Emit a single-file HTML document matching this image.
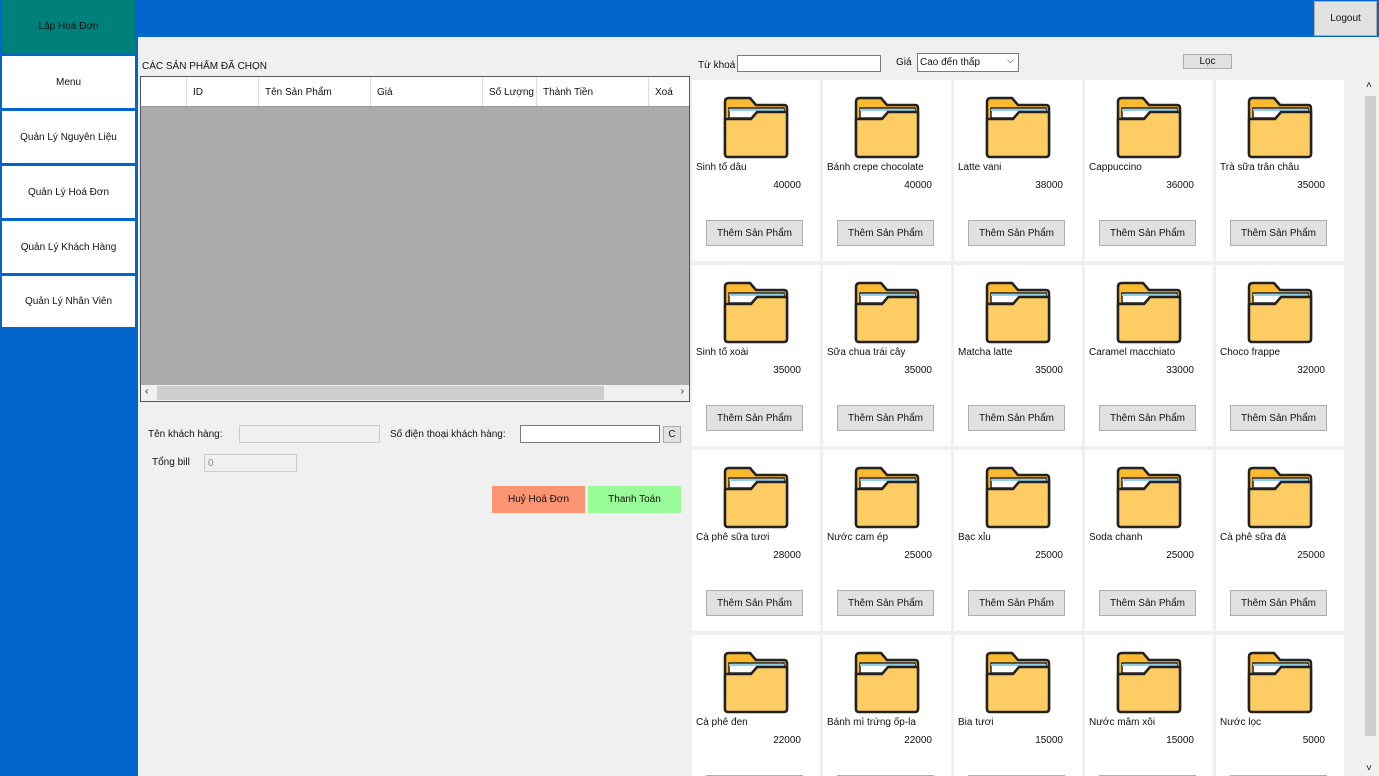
<!DOCTYPE html>
<html style="width:1379px;height:776px;overflow:hidden"><head><meta charset="utf-8"><style>
*{box-sizing:border-box;margin:0;padding:0}
body{width:1379px;height:776px;overflow:hidden;background:#0066cc;font-family:"Liberation Sans",sans-serif;font-size:10px;color:#111;position:relative;white-space:nowrap}
.a{position:absolute}
.side{position:absolute;left:2px;width:133px;background:#fff;display:flex;align-items:center;justify-content:center}
.main{position:absolute;left:138px;top:37px;width:1241px;height:739px;background:#f0f0f0}
.btn{position:absolute;background:#e1e1e1;border:1px solid #adadad;display:flex;align-items:center;justify-content:center}
.inp{position:absolute;background:#fff;border:1px solid #7a7a7a}
.card{position:absolute;width:128px;height:181px;background:#fff}
.card svg{position:absolute;left:31px;top:16px}
.card .n{position:absolute;left:4px;top:82px}
.card .p{position:absolute;right:19px;top:100px}
.card .b{left:14px;top:140px;width:97px;height:26px}
.th{position:absolute;top:0;height:29px;border-right:1px solid #ddd;padding:10px 0 0 6px}
#clip{position:absolute;left:0;top:0;width:1379px;height:776px;overflow:hidden}
</style></head><body><div id="clip">
<div class="side" style="top:0;height:53px;background:#00807a">Lập Hoá Đơn</div>
<div class="side" style="top:56px;height:52px">Menu</div>
<div class="side" style="top:111px;height:52px">Quản Lý Nguyên Liệu</div>
<div class="side" style="top:166px;height:52px">Quản Lý Hoá Đơn</div>
<div class="side" style="top:221px;height:52px">Quản Lý Khách Hàng</div>
<div class="side" style="top:276px;height:51px">Quản Lý Nhân Viên</div>
<div class="btn" style="left:1314px;top:1px;width:63px;height:35px">Logout</div>
<div class="main"></div>
<div class="a" style="left:142px;top:61px">CÁC SẢN PHẨM ĐÃ CHỌN</div>
<div class="a" style="left:140px;top:76px;width:550px;height:326px;border:1px solid #555;background:#ababab">
 <div class="a" style="left:0;top:0;width:548px;height:30px;background:#fff;border-bottom:1px solid #999">
  <div class="th" style="left:0;width:46px"></div>
  <div class="th" style="left:46px;width:72px">ID</div>
  <div class="th" style="left:118px;width:112px">Tên Sản Phẩm</div>
  <div class="th" style="left:230px;width:112px">Giá</div>
  <div class="th" style="left:342px;width:54px">Số Lượng</div>
  <div class="th" style="left:396px;width:112px">Thành Tiền</div>
  <div class="th" style="left:508px;width:40px;border:none">Xoá</div>
 </div>
 <div class="a" style="left:0;top:308px;width:548px;height:16px;background:#f0f0f0">
  <div class="a" style="left:16px;top:1px;width:447px;height:14px;background:#cdcdcd"></div>
  <div class="a" style="left:4px;top:1px">‹</div>
  <div class="a" style="right:5px;top:1px">›</div>
 </div>
</div>
<div class="a" style="left:148px;top:429px">Tên khách hàng:</div>
<div class="inp" style="left:239px;top:425px;width:141px;height:18px;background:#f0f0f0;border-color:#ccc"></div>
<div class="a" style="left:390px;top:429px">Số điện thoại khách hàng:</div>
<div class="inp" style="left:520px;top:425px;width:140px;height:18px"></div>
<div class="btn" style="left:663px;top:426px;width:18px;height:17px">C</div>
<div class="a" style="left:152px;top:457px">Tổng bill</div>
<div class="inp" style="left:204px;top:454px;width:93px;height:18px;background:#f0f0f0;border-color:#ccc;color:#888;padding:3px 3px">0</div>
<div class="btn" style="left:492px;top:486px;width:93px;height:27px;background:#fa9473;border-color:#fa9473">Huỷ Hoá Đơn</div>
<div class="btn" style="left:588px;top:486px;width:93px;height:27px;background:#98fb98;border-color:#98fb98">Thanh Toán</div>
<div class="a" style="left:698px;top:60px">Từ khoá</div>
<div class="inp" style="left:737px;top:55px;width:144px;height:17px"></div>
<div class="a" style="left:896px;top:57px">Giá</div>
<div class="inp" style="left:917px;top:53px;width:102px;height:19px;padding:3px 2px">Cao đến thấp<span style="position:absolute;right:4px;top:1px;font-size:9px">⌵</span></div>
<div class="btn" style="left:1183px;top:54px;width:49px;height:15px">Lọc</div>
<div class="a" style="left:1362px;top:78px;width:17px;height:698px;background:#f0f0f0">
 <div class="a" style="left:3px;top:18px;width:11px;height:640px;background:#cdcdcd"></div>
 <div class="a" style="left:4px;top:2px">˄</div>
 <div class="a" style="left:4px;bottom:2px">˅</div>
</div>
<div id="cards"></div>
</div>
<script>
var d=[["Sinh tố dâu",40000],["Bánh crepe chocolate",40000],["Latte vani",38000],["Cappuccino",36000],["Trà sữa trân châu",35000],["Sinh tố xoài",35000],["Sữa chua trái cây",35000],["Matcha latte",35000],["Caramel macchiato",33000],["Choco frappe",32000],["Cà phê sữa tươi",28000],["Nước cam ép",25000],["Bạc xỉu",25000],["Soda chanh",25000],["Cà phê sữa đá",25000],["Cà phê đen",22000],["Bánh mì trứng ốp-la",22000],["Bia tươi",15000],["Nước mâm xôi",15000],["Nước lọc",5000]];
var svg='<svg width="66" height="63" viewBox="0 0 66 63"><path d="M2 6 Q2 2 6 2 L27 2 L33 9 L61 9 Q64 9 64 12 L64 58 L2 58 Z" fill="#fbb92f" stroke="#222" stroke-width="2.5" stroke-linejoin="round"/><rect x="6" y="12" width="55" height="10" fill="#fff" stroke="#222" stroke-width="1.5"/><rect x="6" y="13" width="55" height="2" fill="#8fd0e8"/><path d="M2 23 L28 23 L34 16 L64 16 L64 58 Q64 61 61 61 L5 61 Q2 61 2 58 Z" fill="#fdcc63" stroke="#222" stroke-width="2.5" stroke-linejoin="round"/></svg>';
var h='';
d.forEach(function(x,i){var c=i%5,r=Math.floor(i/5);
h+='<div class="card" style="left:'+(692+c*131)+'px;top:'+(80+r*185)+'px">'+svg+'<div class="n">'+x[0]+'</div><div class="p">'+x[1]+'</div><div class="btn b">Thêm Sản Phẩm</div></div>';});
document.getElementById('cards').innerHTML=h;
</script>
</body></html>
